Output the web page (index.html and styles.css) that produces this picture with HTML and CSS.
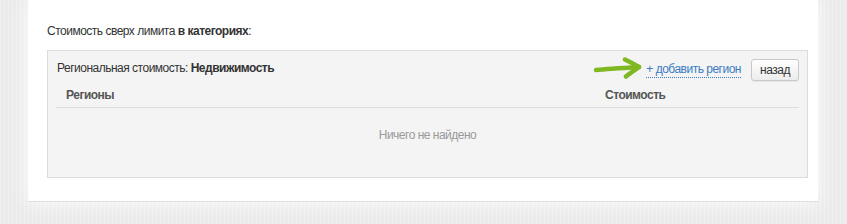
FILE: index.html
```html
<!DOCTYPE html>
<html lang="ru">
<head>
    <meta charset="UTF-8">
    <title>Стоимость сверх лимита</title>
    <link rel="stylesheet" href="styles.css">
</head>
<body>
    <div class="card">
        <div class="title">Стоимость сверх лимита <b>в категориях</b>:</div>

        <div class="panel">
            <div class="panel-head">
                <div class="panel-title">Региональная стоимость: <b>Недвижимость</b></div>
                <div class="actions">
                    <svg class="arrow" width="50" height="22" viewBox="0 0 50 22">
                        <path d="M3 13 C14 12 30 11 46 10" />
                        <path d="M32 2.5 C37 5 42 7.5 46 10 C42 13 37 16 33 19.5" />
                    </svg>
                    <a href="#" class="add-link">+ добавить регион</a>
                    <button class="btn">назад</button>
                </div>
            </div>

            <div class="table">
                <div class="th">Регионы</div>
                <div class="th">Стоимость</div>
                <div class="empty">Ничего не найдено</div>
            </div>
        </div>
    </div>
</body>
</html>
```

FILE: styles.css
```css
* {
    margin: 0;
    padding: 0;
    box-sizing: border-box;
}

body {
    font-family: 'Liberation Sans', Arial, sans-serif;
    font-size: 12px;
    line-height: 16px;
    letter-spacing: -0.5px;
    color: #333;
    background: #ebebeb;
    background-image: repeating-linear-gradient(90deg, rgba(255,255,255,0.25) 0 1px, transparent 1px 4px);
    height: 224px;
    overflow: hidden;
}

.card {
    background: #fff;
    margin: 0 29px 0 28px;
    padding: 23px 10px 23px 19px;
    border-bottom: 1px solid #dedede;
    box-shadow: 0 0 18px rgba(255,255,255,0.9);
}

.title {
    margin-bottom: 11px;
}

.panel {
    background: #f4f4f4;
    border: 1px solid #dcdcdc;
    padding: 0 8px 34px;
}

.panel-head {
    display: flex;
    justify-content: space-between;
    align-items: center;
    padding: 8px 0 1px 1px;
}

.panel-title {
    margin-top: -5px;
}

.actions {
    display: flex;
    align-items: center;
}

.arrow {
    margin-right: 3px;
    margin-top: -5px;
}

.arrow path {
    fill: none;
    stroke: #80b823;
    stroke-width: 4.5;
    stroke-linecap: round;
    stroke-linejoin: round;
}

.add-link {
    color: #3b7cc4;
    text-decoration: none;
    border-bottom: 1px dotted #3b7cc4;
    margin-right: 10px;
    margin-top: -1px;
}

.btn {
    font-family: inherit;
    font-size: 12px;
    letter-spacing: -0.5px;
    color: #333;
    width: 48px;
    height: 22px;
    padding: 0;
    border: 1px solid #c8c8c8;
    border-radius: 3px;
    background: linear-gradient(#fff, #ececec);
    box-shadow: 0 1px 1px rgba(0,0,0,0.06);
    cursor: pointer;
}

.table {
    display: grid;
    grid-template-columns: 539px 1fr;
}

.th {
    font-weight: bold;
    color: #555;
    padding: 5px 10px 4px;
    border-bottom: 1px solid #dcdcdc;
}

.empty {
    grid-column: 1 / -1;
    text-align: center;
    color: #999;
    padding: 19px 0 0;
}
```
